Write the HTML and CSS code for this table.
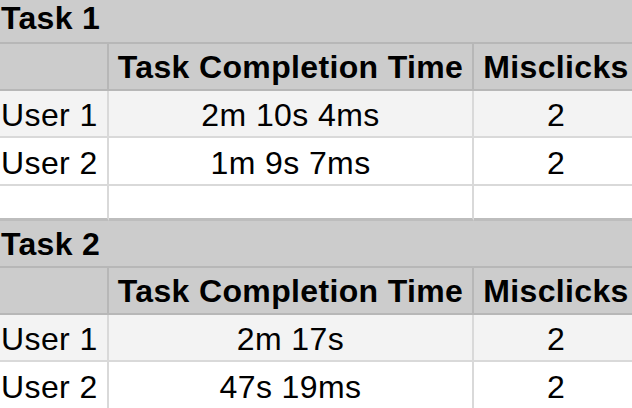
FILE: index.html
```html
<!DOCTYPE html>
<html lang="en">

<head>
    <meta charset="UTF-8">
    <meta name="viewport" content="width=device-width, initial-scale=1.0">
    <title>Usability Test Results</title>
    <link rel="stylesheet" href="styles.css">
</head>

<body>
    <div class="sheet">
        <div class="row title first">
            <div class="cell">Task 1</div>
        </div>
        <div class="row head">
            <div class="cell name"></div>
            <div class="cell">Task Completion Time</div>
            <div class="cell">Misclicks</div>
        </div>
        <div class="row shade">
            <div class="cell name">User 1</div>
            <div class="cell">2m 10s 4ms</div>
            <div class="cell">2</div>
        </div>
        <div class="row plain">
            <div class="cell name">User 2</div>
            <div class="cell">1m 9s 7ms</div>
            <div class="cell">2</div>
        </div>
        <div class="row blank">
            <div class="cell name"></div>
            <div class="cell"></div>
            <div class="cell"></div>
        </div>

        <div class="row title">
            <div class="cell">Task 2</div>
        </div>
        <div class="row head">
            <div class="cell name"></div>
            <div class="cell">Task Completion Time</div>
            <div class="cell">Misclicks</div>
        </div>
        <div class="row shade">
            <div class="cell name">User 1</div>
            <div class="cell">2m 17s</div>
            <div class="cell">2</div>
        </div>
        <div class="row plain">
            <div class="cell name">User 2</div>
            <div class="cell">47s 19ms</div>
            <div class="cell">2</div>
        </div>
    </div>
</body>

</html>
```

FILE: styles.css
```css
body {
    margin: 0;
    overflow: hidden;
    background: #ffffff;
    font-family: "Liberation Sans", Arial, sans-serif;
    color: #000000;
}

.sheet {
    width: 640px;
}

.row {
    display: grid;
    grid-template-columns: 109px 365px 166px;
    height: 47px;
}

.cell {
    box-sizing: border-box;
    display: flex;
    align-items: flex-end;
    justify-content: center;
    font-size: 32px;
    line-height: 36px;
    letter-spacing: 0.4px;
    padding-bottom: 3px;
    border-right: 2px solid #d9d9d9;
    border-bottom: 2px solid #d9d9d9;
    white-space: nowrap;
}

.cell.name {
    justify-content: flex-start;
    padding-left: 1px;
}

/* merged title row */
.title {
    grid-template-columns: 1fr;
    background: #cccccc;
}

.title .cell {
    justify-content: flex-start;
    padding-left: 1px;
    padding-bottom: 4px;
    font-weight: bold;
    letter-spacing: 0.3px;
    border-right: none;
    border-bottom-color: #b7b7b7;
}

.title.first {
    height: 44px;
}

.title.first .cell {
    padding-bottom: 6px;
}

.head {
    background: #cccccc;
}

.head .cell {
    font-weight: bold;
    letter-spacing: 0.35px;
    padding-bottom: 4px;
    border-color: #b7b7b7;
}

.shade {
    background: #f3f3f3;
}

.plain {
    background: #ffffff;
    height: 48px;
}

.blank {
    height: 35px;
}

.blank .cell {
    border-bottom: 3px solid #bdbdbd;
}
```
